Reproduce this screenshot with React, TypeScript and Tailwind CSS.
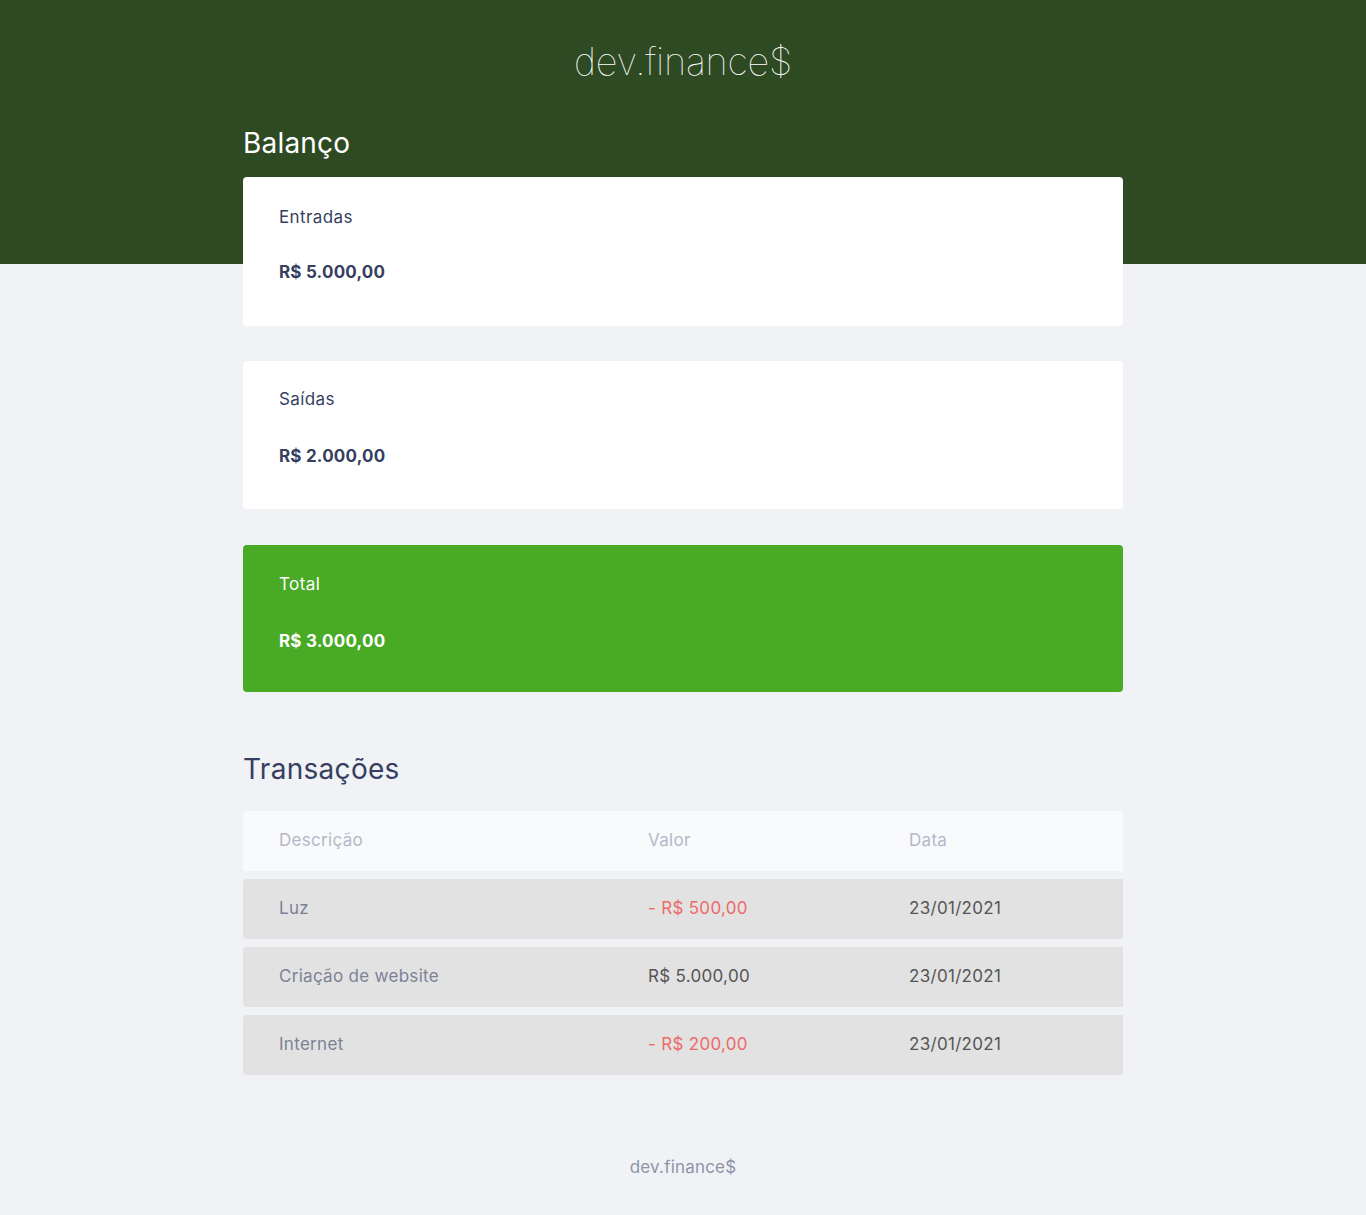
import React from "react";

const font = { fontFamily: "Inter, 'Open Sans', 'Liberation Sans', sans-serif" };

const rows = [
  { d: "Luz", v: "- R$ 500,00", neg: true, date: "23/01/2021" },
  { d: "Criação de website", v: "R$ 5.000,00", neg: false, date: "23/01/2021" },
  { d: "Internet", v: "- R$ 200,00", neg: true, date: "23/01/2021" },
];

function Card({ label, value, total, top = "pt-7", gap = "mt-[31px]", h = "h-[149px]" }: { label: string; value: string; total?: boolean; top?: string; gap?: string; h?: string }) {
  return (
    <div className={`${total ? "bg-[#49aa26] text-white mt-px" : "bg-white text-[#363f5f]"} rounded-[4px] px-9 ${top} ${h}`}>
      <div className="text-[17px] leading-6 tracking-[0.4px]">{label}</div>
      <div className={`${gap} text-[17px] leading-6 font-bold tracking-[0.2px]`}>{value}</div>
    </div>
  );
}

export default function App() {
  return (
    <div className="min-h-[1215px] bg-[#f0f2f5]" style={font}>
      <header className="bg-[#2e4a23] h-[264px] pt-[37px] flex justify-center">
        <div className="text-[38px] leading-[48px] font-thin text-white tracking-[-0.3px]">dev.finance$</div>
      </header>
      <main className="w-[880px] mx-auto -mt-[137px]">
        <h2 className="text-white text-[28px] leading-8 mb-[18px] font-normal tracking-[0.2px]">Balanço</h2>
        <div className="flex flex-col gap-[35px]">
          <Card label="Entradas" value="R$ 5.000,00" />
          <Card label="Saídas" value="R$ 2.000,00" top="pt-[26px]" gap="mt-[33px]" h="h-[148px]" />
          <Card label="Total" value="R$ 3.000,00" total top="pt-[27px]" gap="mt-[33px]" h="h-[147px]" />
        </div>
        <h2 className="text-[#363f5f] text-[28px] leading-8 mt-[61px] mb-[26px] tracking-[0.3px]">Transações</h2>
        <div className="flex flex-col gap-2">
          <div className="grid grid-cols-[369px_261px_250px] h-[60px] items-center bg-[#f9fafb] rounded-l-[4px] text-[#b4b8c8] text-[17px] tracking-[0.3px]">
            <div className="pl-9">Descrição</div>
            <div className="pl-9">Valor</div>
            <div className="pl-9">Data</div>
          </div>
          {rows.map((r) => (
            <div key={r.d} className="grid grid-cols-[369px_261px_250px] h-[60px] items-center bg-[#e2e2e2] rounded-l-[4px] text-[17px] tracking-[0.3px]">
              <div className="pl-9 text-[#7c8195]">{r.d}</div>
              <div className={`pl-9 ${r.neg ? "text-[#ee6a6a]" : "text-[#555555]"}`}>{r.v}</div>
              <div className="pl-9 text-[#555555]">{r.date}</div>
            </div>
          ))}
        </div>
      </main>
      <footer className="text-center text-[#8f94a8] text-[17px] leading-6 pt-[80px] pb-8 tracking-[0.2px]">dev.finance$</footer>
    </div>
  );
}
